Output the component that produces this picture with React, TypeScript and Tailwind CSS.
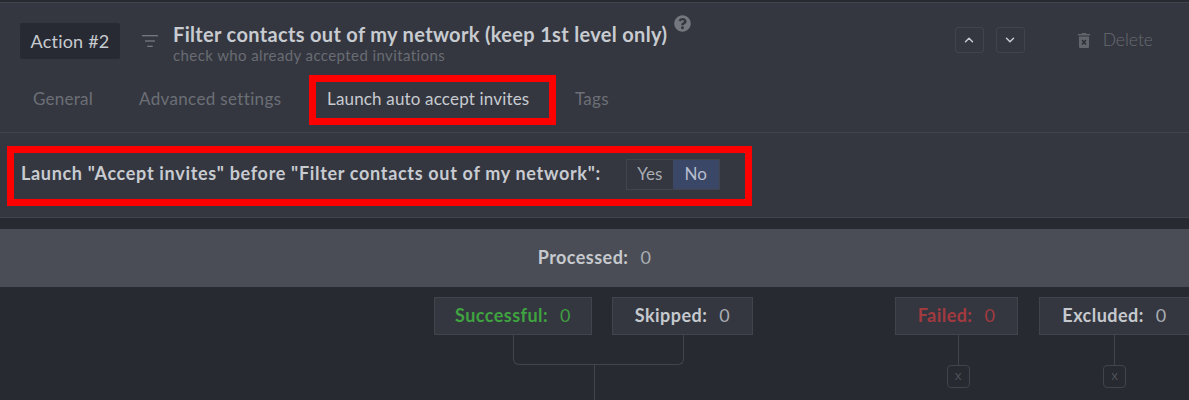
import React from "react";
import { ChevronDown, ChevronUp, ListFilter } from "lucide-react";
import { FaQuestionCircle } from "react-icons/fa";

const FONT = "font-['Lato','Noto_Sans',sans-serif]";

const tabs = [
  { label: "General", className: "w-[139px] pl-[33px] tracking-[0.25px] text-[#6c6f76]" },
  { label: "Advanced settings", className: "w-[188px] tracking-[0.35px] text-[#6c6f76]" },
  { label: "Launch auto accept invites", className: "w-[248px] tracking-[0.17px] text-[#c8cbd0]" },
  { label: "Tags", className: "tracking-[0.25px] text-[#6c6f76]" },
];

const TrashIcon = () => (
  <svg width="12" height="15" viewBox="0 0 12 15" className="shrink-0">
    <path d="M4 0h4l.6 1H12v1.6H0V1h3.4z" fill="#62656c" />
    <path d="M1 3.6h10V14a1 1 0 0 1-1 1H2a1 1 0 0 1-1-1z" fill="#62656c" />
    <path d="M4 7l4 4.5M8 7l-4 4.5" stroke="#2c2f36" strokeWidth="1.5" />
  </svg>
);

const StatBox = ({
  label,
  width,
  color = "text-[#c6c9cd]",
  valueColor = "text-[#a9adb3]",
}: {
  label: string;
  width: string;
  color?: string;
  valueColor?: string;
}) => (
  <div
    className={`${width} h-[38px] shrink-0 flex items-center justify-center gap-3 pb-[2px] bg-[#343740] border border-[#41444c] text-[18px] tracking-[0.45px]`}
  >
    <span className={`font-bold ${color}`}>{label}</span>
    <span className={valueColor}>0</span>
  </div>
);

const ExitNode = () => (
  <div className="flex flex-col items-center">
    <div className="w-px h-[30px] bg-[#41444c]" />
    <div className="w-[23px] h-[23px] flex items-center justify-center border border-[#41444c] rounded-[4px] text-[10px] font-light text-[#74777e]">
      X
    </div>
  </div>
);

export default function App() {
  return (
    <div className={`${FONT} w-[1189px] h-[400px] overflow-hidden bg-[#272a31] pt-[2px]`}>
      {/* Action panel */}
      <div className="h-[216px] bg-[#343740] border-t border-b border-[#41444c]">
        <div className="relative h-[130px] border-b border-[#41444c]">
          <div className="flex items-start pt-[20px] pl-[20px] pr-[36px]">
            <div className="w-[100px] h-[36px] flex items-center justify-center rounded-[2px] bg-[#272a33] text-[18px] tracking-[0.2px] text-[#c8cbd0]">
              Action #2
            </div>
            <ListFilter size={18} strokeWidth={1.5} className="ml-[21px] mt-[9px] text-[#8a8d93]" />
            <div className="ml-[14px]">
              <div className="flex items-start">
                <span className="text-[20px] leading-[24px] mt-[-1px] font-bold tracking-[0.33px] text-[#c8cbd0]">
                  Filter contacts out of my network (keep 1st level only)
                </span>
                <FaQuestionCircle size={17} className="ml-[7px] mt-[-8px] text-[#74777d]" />
              </div>
              <div className="text-[15px] leading-[18px] tracking-[0.4px] text-[#696c73]">
                check who already accepted invitations
              </div>
            </div>
            <div className="ml-auto mt-[4px] flex items-center">
              <button className="w-[29px] h-[26px] flex items-center justify-center border border-[#41444c] rounded-[3px] text-[#c8cbd0]">
                <ChevronUp size={14} strokeWidth={2.5} />
              </button>
              <button className="ml-[12px] w-[29px] h-[26px] flex items-center justify-center border border-[#41444c] rounded-[3px] text-[#c8cbd0]">
                <ChevronDown size={14} strokeWidth={2.5} />
              </button>
              <div className="ml-[53px] flex items-center gap-[13px] text-[17.5px] font-light text-[#686b72]">
                <TrashIcon />
                Delete
              </div>
            </div>
          </div>
          <div className="flex items-center mt-[21px] h-[28px] text-[17px]">
            {tabs.map((tab) => (
              <div key={tab.label} className={tab.className}>
                {tab.label}
              </div>
            ))}
          </div>
          {/* Red annotation */}
          <div className="absolute left-[309px] top-[72px] w-[247px] h-[50px] border-[7px] border-[#ff0000]" />
        </div>

        <div className="relative flex items-center h-[84px] pl-[21px] pb-[2px]">
          <span className="mt-[-1px] text-[18px] font-bold tracking-[0.68px] text-[#c8cbd0]">
            Launch "Accept invites" before "Filter contacts out of my network":
          </span>
          <div className="ml-[25px] flex h-[31px] border border-[#41444c] text-[17px]">
            <div className="w-[46px] flex items-center justify-center text-[#a9adb3]">Yes</div>
            <div className="w-[46px] flex items-center justify-center bg-[#3b4766] text-[#b8bfcf]">No</div>
          </div>
          {/* Red annotation */}
          <div className="absolute left-[7px] top-[13px] w-[745px] h-[60px] border-[7px] border-[#ff0000]" />
        </div>
      </div>

      {/* Processed band */}
      <div className="mt-[11px] h-[58px] flex items-center justify-center gap-3 pb-[2px] bg-[#4a4d55] text-[18px] tracking-[0.45px]">
        <span className="font-bold text-[#c6c9cd]">Processed:</span>
        <span className="text-[#a9adb3]">0</span>
      </div>

      {/* Result tree */}
      <div className="flex items-start pt-[10px] pl-[434px]">
        <div className="w-[319px]">
          <div className="flex gap-5">
            <StatBox label="Successful:" width="w-[158px]" color="text-[#3fa33f]" valueColor="text-[#3f9f3f]" />
            <StatBox label="Skipped:" width="w-[141px]" />
          </div>
          <div className="ml-[79px] w-[171px] h-[30px] border-x border-b border-[#41444c] rounded-b-[6px]" />
          <div className="ml-[160px] w-px h-[35px] bg-[#41444c]" />
        </div>
        <div className="ml-[142px] w-[123px] flex flex-col items-center">
          <StatBox label="Failed:" width="w-[123px]" color="text-[#a33a3f]" valueColor="text-[#a33a3f]" />
          <div className="mr-[-3px]">
            <ExitNode />
          </div>
        </div>
        <div className="ml-[21px] w-[151px] shrink-0 flex flex-col items-center">
          <StatBox label="Excluded:" width="w-[151px]" />
          <ExitNode />
        </div>
      </div>
    </div>
  );
}
